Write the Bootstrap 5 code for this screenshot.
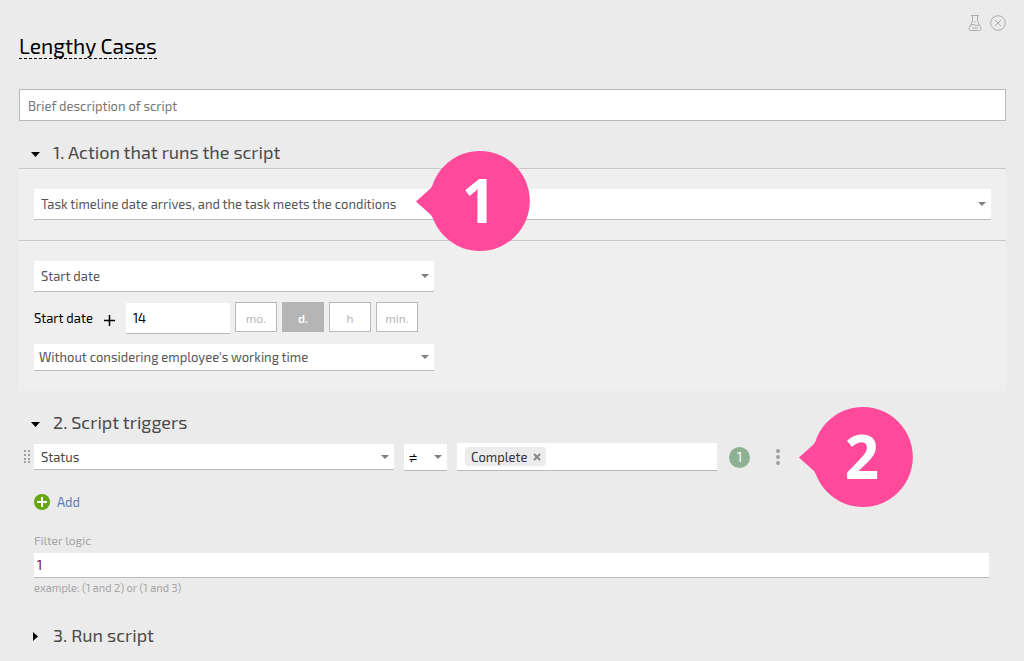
<!DOCTYPE html>
<html lang="en">
<head>
<meta charset="utf-8">
<meta name="viewport" content="width=device-width, initial-scale=1">
<title>Lengthy Cases</title>
<link href="https://cdn.jsdelivr.net/npm/bootstrap@5.3.0/dist/css/bootstrap.min.css" rel="stylesheet">
<style>
  body { background: #ebebeb; color: #000; font-family: "Exo 2", Roboto, "Noto Sans", sans-serif; font-size: 13px; line-height: 20px; }
  .page { padding: 14px 18px 0 19px; }
  .top-tools { height: 18px; }
  .tool { line-height: 0; color: #adadad; }
  .script-title { padding-top: 2px; font-size: 21px; line-height: 24px; border-bottom: 1px dashed #000; color: #000; }
  .form-control, .form-select { border: 0; border-bottom: 1px solid #b9b9b9; border-radius: 0; font-size: 13px; line-height: 20px; color: #555; background-color: #fff; }
  .form-select { background-image: url("data:image/svg+xml,%3csvg xmlns='http://www.w3.org/2000/svg' viewBox='0 0 8 4'%3e%3cpath fill='%23808080' d='M0 0h8L4 4z'/%3e%3c/svg%3e"); background-size: 8px 4px; background-position: right 5px center; padding: 0 20px 0 7px; }
  .h-tall { height: 31px; }
  .h-low { height: 27px; }
  .description { height: 32px; margin-top: 30px; padding: 2px 8px 0; border: 1px solid #b9b9b9; }
  .description::placeholder { color: #777; }
  .section-head { margin: 0; padding-top: 19px; font-size: 18px; line-height: 24px; }
  .section-head button { padding: 0 0 0 12px; color: #4a4a4a; text-align: left; }
  .section-head svg { width: 9px; height: 9px; margin-right: 9px; vertical-align: 1px; }
  .ruled { border-bottom: 1px solid #c8c8c8; padding-bottom: 4px; }
  .panel { background: #efefef; }
  .event { padding: 20px 15px; border-bottom: 1px solid #c8c8c8; }
  .timing { padding: 20px 15px; }
  .timing > .form-select { width: 400px; }
  .offset-row { height: 32px; margin: 10px 0; gap: 11px; }
  .amount-group { gap: 5px; }
  .amount { width: 104px; color: #000; padding: 0 7px; }
  .units { gap: 5px; }
  .unit { width: 42px; height: 30px; padding: 2px 0 0; border: 1px solid #b9b9b9; border-radius: 0; background: #fff; color: #b5b5b5; font-size: 12px; line-height: 20px; }
  .unit.active { background: #b5b5b5; border-color: #b5b5b5; color: #fff; font-weight: 600; }
  .timing > .worktime { padding-left: 5px; }
  .inner { padding: 0 17px 0 15px; }
  .trigger { gap: 10px; margin-top: 9px; }
  .grip { left: -10px; top: 7px; line-height: 0; }
  .field-pick { width: 360px; height: 26px; color: #444; align-self: center; }
  .op-pick { width: 43px; padding: 0 0 0 4px; color: #000; font-size: 16px; }
  .values { width: 260px; height: 28px; padding: 0 8px; background: #fff; border-bottom: 1px solid #b9b9b9; }
  .chip { height: 19px; padding: 0 5px 0 6px; background: #ececec; border-radius: 3px; color: #333; gap: 5px; line-height: 18px; }
  .chip button, .more { padding: 0; border: 0; background: none; line-height: 0; }
  .count { width: 21px; height: 21px; margin-left: 2px; background: #8fb193; color: #fff; }
  .more { width: 16px; margin-left: 10px; }
  .add-link { color: #5c7bbd; gap: 7px; margin-top: 21px; }
  .logic-label { margin: 17px 0 5px; color: #a5a5a5; font-size: 12px; line-height: 16px; }
  .hint { margin-top: 2px; color: #a5a5a5; font-size: 11px; line-height: 16px; }
  .logic { height: 25px; padding: 0 3px; color: #7b0047; }
  .last-head { padding-top: 27px; }
  .callout { width: 114px; height: 100px; pointer-events: none; z-index: 2; }
  .callout svg { position: absolute; inset: 0; }
  .callout span { position: relative; display: block; padding-left: 12px; color: #fff; font: 700 60px/98px "Open Sans", "Noto Sans", sans-serif; text-align: center; }
  .callout-event { left: 397px; top: -18px; }
  .callout-trigger { left: 765px; top: -36px; }
</style>
</head>
<body>
<main class="page">
  <div class="top-tools d-flex justify-content-end gap-2">
    <button class="tool btn p-0 border-0" type="button" aria-label="Test script">
      <svg width="14" height="18" viewBox="0 0 14 18" fill="none" stroke="currentColor"><path d="M3 1.500h8M4.500 2v5L1 14.500q-.5 2 1.500 2h9q2 0 1.500-2L9.500 7V2M3 11q2-1 4 0t4 0M4 14h6M6.500 8h1"/></svg>
    </button>
    <button class="tool btn p-0 border-0" type="button" aria-label="Close">
      <svg width="16" height="18" viewBox="0 0 16 18" fill="none" stroke="currentColor"><circle cx="8" cy="9" r="7.300"/><path d="M5 6l6 6M11 6l-6 6"/></svg>
    </button>
  </div>
  <h1 class="script-title d-inline-block fw-normal mb-0 align-top">Lengthy Cases</h1>
  <input class="form-control description" type="text" placeholder="Brief description of script" aria-label="Brief description of script">

  <section>
    <h2 class="section-head ruled fw-normal">
      <button class="border-0 bg-transparent" type="button" aria-expanded="true"><svg viewBox="0 0 9 9"><path d="M0 3h9L4.500 8z"/></svg> 1. Action that runs the script</button>
    </h2>
    <div class="panel">
      <div class="event position-relative">
        <select class="form-select h-tall" aria-label="Event"><option>Task timeline date arrives, and the task meets the conditions</option></select>
        <div class="callout callout-event position-absolute">
          <svg viewBox="0 0 114 100"><path fill="#ff4a9c" d="M0 50.500L15 37Q17 34 18 30A50 50 0 1 1 18 70Q17 67 15 64z"/></svg>
          <span>1</span>
        </div>
      </div>
      <div class="timing">
        <select class="form-select h-tall" aria-label="Date field"><option>Start date</option></select>
        <div class="offset-row d-flex align-items-center">
          <label for="amount">Start date</label>
          <svg class="mt-1" width="11" height="11" viewBox="0 0 11 11" stroke="#000" stroke-width="1.500" aria-label="plus"><path d="M5.500 0v11M0 5.500h11"/></svg>
          <div class="amount-group d-flex align-self-stretch">
            <input id="amount" class="form-control amount h-tall align-self-end" type="text" value="14">
            <div class="units d-flex" role="group" aria-label="Unit">
              <button class="unit" type="button">mo.</button>
              <button class="unit active" type="button" aria-pressed="true">d.</button>
              <button class="unit" type="button">h</button>
              <button class="unit" type="button">min.</button>
            </div>
          </div>
        </div>
        <select class="form-select worktime h-low" aria-label="Working time"><option>Without considering employee's working time</option></select>
      </div>
    </div>
  </section>

  <section>
    <h2 class="section-head fw-normal">
      <button class="border-0 bg-transparent" type="button" aria-expanded="true"><svg viewBox="0 0 9 9"><path d="M0 3h9L4.500 8z"/></svg> 2. Script triggers</button>
    </h2>
    <div class="inner">
      <div class="trigger d-flex align-items-center position-relative">
        <span class="grip position-absolute"><svg width="8" height="14" viewBox="0 0 8 14" fill="#a0a0a0"><path d="M0 0h2v2H0zM4 0h2v2H4zM0 4h2v2H0zM4 4h2v2H4zM0 8h2v2H0zM4 8h2v2H4zM0 11h2v2H0zM4 11h2v2H4z"/></svg></span>
        <select class="form-select field-pick" aria-label="Field"><option>Status</option></select>
        <select class="form-select op-pick h-low" aria-label="Operator"><option>≠</option></select>
        <div class="values d-flex align-items-center">
          <span class="chip d-flex align-items-center">Complete
            <button type="button" aria-label="Remove Complete"><svg width="8" height="8" viewBox="0 0 8 8" stroke="#888" stroke-width="2"><path d="M1 1l6 6M7 1L1 7"/></svg></button>
          </span>
        </div>
        <span class="count rounded-circle d-flex align-items-center justify-content-center">1</span>
        <button class="more" type="button" aria-label="More"><svg width="4" height="16" viewBox="0 0 4 16" fill="#a0a0a0"><circle cx="2" cy="2" r="2"/><circle cx="2" cy="8" r="2"/><circle cx="2" cy="14" r="2"/></svg></button>
        <div class="callout callout-trigger position-absolute">
          <svg viewBox="0 0 114 100"><path fill="#ff4a9c" d="M0 50.500L15 37Q17 34 18 30A50 50 0 1 1 18 70Q17 67 15 64z"/></svg>
          <span>2</span>
        </div>
      </div>
      <a href="#" class="add-link d-inline-flex align-items-center text-decoration-none">
        <svg width="16" height="16" viewBox="0 0 16 16"><circle cx="8" cy="8" r="8" fill="#62a80c"/><path d="M8 3v10M3 8h10" stroke="#fff" stroke-width="2"/></svg>
        Add
      </a>
      <label for="logic" class="logic-label d-block">Filter logic</label>
      <input id="logic" class="form-control logic" type="text" value="1">
      <div class="hint">example: (1 and 2) or (1 and 3)</div>
    </div>
  </section>

  <section>
    <h2 class="section-head last-head fw-normal">
      <button class="border-0 bg-transparent" type="button" aria-expanded="false"><svg viewBox="0 0 9 9"><path d="M2 0v9L7 4.500z"/></svg> 3. Run script</button>
    </h2>
  </section>
</main>
<script src="https://cdn.jsdelivr.net/npm/bootstrap@5.3.0/dist/js/bootstrap.bundle.min.js"></script>
</body>
</html>
